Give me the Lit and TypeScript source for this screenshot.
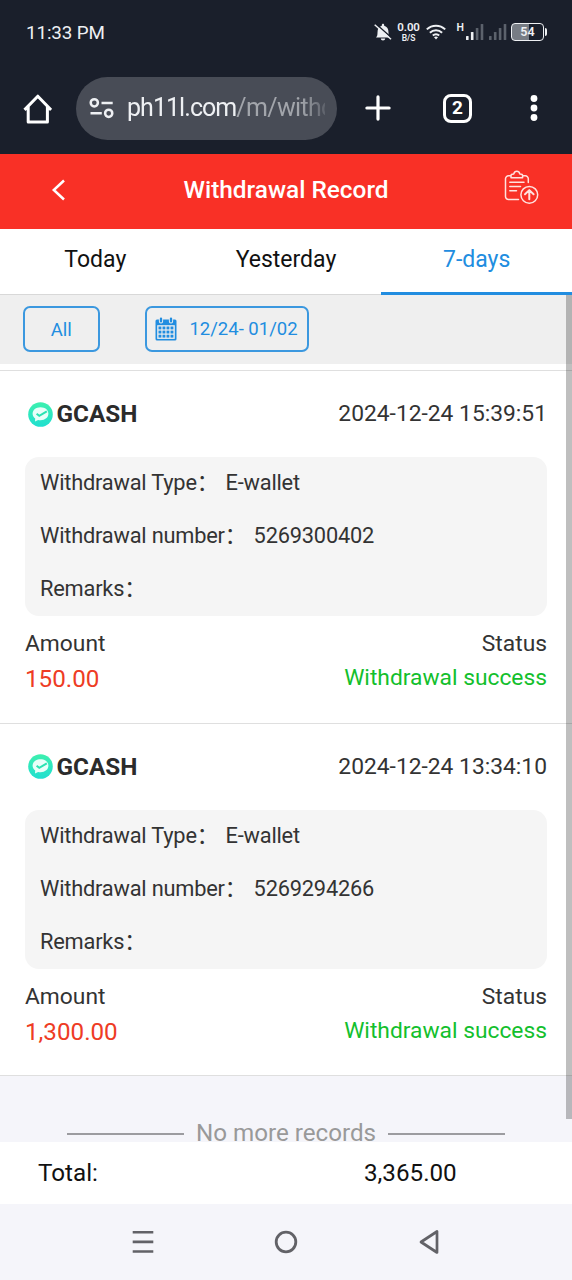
import { LitElement, html, css, svg } from "lit";
import { customElement, property } from "lit/decorators.js";

interface WithdrawalRecord {
  time: string;
  number: string;
  amount: string;
}

const records: WithdrawalRecord[] = [
  { time: "2024-12-24 15:39:51", number: "5269300402", amount: "150.00" },
  { time: "2024-12-24 13:34:10", number: "5269294266", amount: "1,300.00" },
];

@customElement("status-bar")
class StatusBar extends LitElement {
  static styles = css`
    :host { display: flex; height: 63px; align-items: center; justify-content: space-between; box-sizing: border-box; padding: 0 25px 0 26px; color: #eef0f3; }
    .time { font-size: 18.8px; line-height: 24px; letter-spacing: -0.1px; padding-top: 2px; }
    .icons { display: flex; align-items: center; }
    .rate { display: flex; flex-direction: column; align-items: center; width: 24px; margin: 0 5px 0 5px; font-weight: 600; }
    .rate-value { font-size: 11.5px; line-height: 13px; letter-spacing: -0.1px; }
    .rate-unit { font-size: 8.5px; line-height: 10px; margin-top: -1px; }
    .net { font-size: 10.5px; line-height: 10px; font-weight: 600; margin: 0 2px 7px 11px; }
    .battery { display: flex; align-items: center; justify-content: center; box-sizing: border-box; width: 33px; height: 18px; margin-left: 4px; border: 1.7px solid #eef0f3; border-radius: 4px; background: linear-gradient(90deg, #777c84 54%, transparent 54%); font-size: 12.5px; font-weight: 600; }
    .cap { width: 2px; height: 8px; margin-left: 1px; background: #eef0f3; border-radius: 0 2px 2px 0; }
    svg { display: block; }
  `;
  private bars(active: number) {
    return [0, 1, 2, 3].map(
      (i) => svg`<rect x=${i * 4.9} y=${12 - i * 4} width="2.6" height=${4 + i * 4} rx="0.6" fill=${i < active ? "#eef0f3" : "#5c626c"} />`
    );
  }
  render() {
    return html`
      <span class="time">11:33 PM</span>
      <div class="icons">
        <svg width="18" height="18" viewBox="0 0 18 18">
          <path d="M2 14.500c1.300-1.200 1.500-2.600 1.500-5 0-3.600 1.400-6 4.300-6.800C7.800 1.400 8.200.8 9 .8s1.200.6 1.200 1.900c2.900.8 4.300 3.200 4.300 6.800 0 2.400.2 3.800 1.500 5z M6.800 15.500h4.400c0 1.200-1 2-2.200 2s-2.200-.8-2.200-2z" fill="#eef0f3" />
          <path d="M1.800 .8 17.800 15" stroke="#1a1f2b" stroke-width="1.500" />
          <path d="M.7 1.800 17 16.300" stroke="#eef0f3" stroke-width="1.500" />
        </svg>
        <div class="rate"><span class="rate-value">0.00</span><span class="rate-unit">B/S</span></div>
        <svg width="20" height="16" viewBox="0 0 20 16" fill="none" stroke="#eef0f3" stroke-width="2">
          <path d="M.8 5.400a13.300 13.300 0 0 1 18.400 0M3.900 8.700a8.800 8.800 0 0 1 12.200 0M6.800 11.600a4.700 4.700 0 0 1 6.400 0" />
          <path d="M10 15.500l-2-2.200c1.200-1 2.800-1 4 0z" fill="#eef0f3" stroke="none" />
        </svg>
        <span class="net">H</span>
        <svg width="18" height="16" viewBox="0 0 18 16">${this.bars(2)}</svg>
        <svg width="23" height="16" viewBox="-5 0 23 16">${this.bars(0)}</svg>
        <div class="battery">54</div><span class="cap"></span>
      </div>
    `;
  }
}

@customElement("browser-bar")
class BrowserBar extends LitElement {
  static styles = css`
    :host { display: flex; height: 90px; align-items: center; box-sizing: border-box; padding: 0 24px 0 23px; }
    svg { display: block; flex: none; }
    .home { margin-top: 2px; }
    .address { display: flex; align-items: center; box-sizing: border-box; width: 261px; height: 63px; margin-left: 24px; padding: 0 12px; border-radius: 32px; background: #484c56; }
    .url { flex: 1; height: 34px; overflow: hidden; margin-left: 13px; font-size: 25px; line-height: 34px; letter-spacing: -0.95px; white-space: nowrap; color: #eef0f3; mask-image: linear-gradient(90deg, #000 88%, rgba(0, 0, 0, 0.25)); }
    .path { color: #a2a5ab; letter-spacing: -0.65px; }
    .plus { margin-left: 28px; }
    .tabs { display: flex; align-items: center; justify-content: center; box-sizing: border-box; width: 29px; height: 29px; margin-left: 52px; border: 3px solid #fff; border-radius: 8px; color: #fff; font-size: 19px; font-weight: 700; line-height: 20px; }
    .more { margin-left: 57px; }
  `;
  render() {
    return html`
      <svg class="home" width="29" height="31" viewBox="0 0 29 31" fill="none" stroke="#fff" stroke-width="3">
        <path d="M1.500 15.900 14.800 2.200 28.100 15.900M5.200 12.500V27.900h19.200V12.500" stroke-linejoin="round" />
      </svg>
      <div class="address">
        <svg width="26" height="22" viewBox="0 0 26 22" fill="none" stroke="#eef0f3" stroke-width="2.500">
          <circle cx="6.300" cy="5.800" r="3.600" /><circle cx="20.700" cy="16.300" r="3.600" />
          <path d="M13.500 6H24.700M2.500 16.300H13.800" />
        </svg>
        <div class="url">ph11l.com<span class="path">/m/withd</span></div>
      </div>
      <svg class="plus" width="26" height="26" viewBox="0 0 26 26" stroke="#fff" stroke-width="3.200" stroke-linecap="round">
        <path d="M13 1.900V24.100M1.900 13H24.100" />
      </svg>
      <div class="tabs">2</div>
      <svg class="more" width="10" height="28" viewBox="0 0 10 28" fill="#fff">
        <circle cx="5" cy="4.500" r="3.400" /><circle cx="5" cy="14" r="3.400" /><circle cx="5" cy="23.500" r="3.400" />
      </svg>
    `;
  }
}

@customElement("record-item")
class RecordItem extends LitElement {
  @property({ attribute: false }) record!: WithdrawalRecord;
  static styles = css`
    :host { display: block; box-sizing: border-box; height: 352.700px; padding: 27px 25px 0; border-bottom: 1px solid #dfdfdf; background: #fff; color: #333; font-size: 22.800px; line-height: 32px; }
    .head, .foot { display: flex; justify-content: space-between; }
    .head { height: 32px; }
    .wallet { display: flex; align-items: center; gap: 3.500px; padding-left: 3px; font-size: 24.300px; font-weight: 700; color: #2b2b2b; }
    .details { box-sizing: border-box; height: 159px; margin-top: 27px; padding: 10px 15px 0; border-radius: 14px; background: #f5f5f5; font-size: 21.800px; letter-spacing: -0.2px; }
    .row { height: 53px; line-height: 32px; white-space: pre; }
    .value { margin-left: 2px; }
    .foot { margin-top: 12px; }
    .right { text-align: right; }
    .amount, .success { line-height: 36px; }
    .amount { font-size: 24.200px; color: #ee3c24; padding-top: 1px; }
    .success { color: #13bf2d; }
  `;
  render() {
    const r = this.record;
    return html`
      <div class="head">
        <div class="wallet">
          <svg width="25" height="25" viewBox="0 0 25 25">
            <defs><linearGradient id="g" x1="0" y1="0" x2="0" y2="1"><stop offset="0" stop-color="#3df0ae" /><stop offset="1" stop-color="#20dfd0" /></linearGradient></defs>
            <circle cx="12.500" cy="12.500" r="12.300" fill="url(#g)" />
            <path d="M12.500 5.300c4.700 0 7.900 2.800 7.900 6.500s-3.300 6.400-7.900 6.400c-.8 0-1.600-.1-2.400-.3L7 19.500l.2-3.100c-1.700-1.200-2.600-2.800-2.600-4.600 0-3.700 3.300-6.500 7.900-6.500z" fill="#e8fff9" />
            <path d="M8.600 11.700l2.700 2.100 7.500-4.500" fill="none" stroke="#2be3b2" stroke-width="2" />
          </svg>
          <span>GCASH</span>
        </div>
        <span>${r.time}</span>
      </div>
      <div class="details">
        <div class="row">Withdrawal Type： <span class="value">E-wallet</span></div>
        <div class="row">Withdrawal number： <span class="value">${r.number}</span></div>
        <div class="row">Remarks：</div>
      </div>
      <div class="foot">
        <div><div>Amount</div><div class="amount">${r.amount}</div></div>
        <div class="right"><div>Status</div><div class="success">Withdrawal success</div></div>
      </div>
    `;
  }
}

@customElement("app-root")
class AppRoot extends LitElement {
  static styles = css`
    :host { display: flex; flex-direction: column; position: relative; width: 572px; height: 1280px; overflow: hidden; background: #f5f5fa; font-family: Roboto, "Noto Sans CJK SC", sans-serif; }
    svg { display: block; }
    .chrome { flex: none; height: 154px; background: #1a1f2b; }
    .header { flex: none; display: grid; grid-template-columns: 118px 1fr 118px; height: 74.500px; align-items: center; background: #f93026; color: #fff; }
    .title { text-align: center; font-size: 24.400px; font-weight: 500; line-height: 32px; padding-bottom: 3px; }
    .back { margin-left: 51px; margin-bottom: 3px; }
    .clip { margin-left: 50px; margin-bottom: 6px; }
    .tabs { flex: none; display: grid; grid-template-columns: repeat(3, 1fr); height: 66.500px; box-sizing: border-box; background: #fff; }
    .tab { text-align: center; font-size: 23px; line-height: 62px; color: #111; border-bottom: 1px solid #d8d8d8; }
    .active { color: #218de0; border-bottom: 3px solid #218de0; }
    .filters { flex: none; display: flex; height: 69px; align-items: center; box-sizing: border-box; padding: 0 23px 1px; gap: 45px; background: #efefef; }
    .chip { display: flex; align-items: center; justify-content: center; box-sizing: border-box; height: 46px; border: 2px solid #3b98df; border-radius: 7px; color: #218de0; font-size: 18.500px; }
    .all { width: 76.500px; padding-top: 2px; }
    .range { width: 164px; gap: 12px; }
    .gap { flex: none; box-sizing: border-box; height: 7px; border-bottom: 1px solid #dfdfdf; background: #fff; }
    .list { flex: none; }
    .end { display: flex; flex: none; height: 66px; box-sizing: border-box; justify-content: center; gap: 12px; padding-top: 41px; color: #999; font-size: 24.200px; line-height: 25px; }
    .label { padding-top: 4px; }
    .rule { width: 117px; height: 1.500px; margin-top: 16px; background: #9c9ca0; }
    .total { flex: none; display: grid; grid-template-columns: 364px 1fr; height: 62px; line-height: 62px; box-sizing: border-box; background: #fff; color: #111; font-size: 24.200px; }
    .total-label { padding-left: 38px; }
    .nav { flex: none; display: flex; height: 76px; align-items: center; justify-content: center; gap: 118px; box-sizing: border-box; }
    .scroll { position: absolute; z-index: 1; right: 0; top: 295px; width: 6px; height: 824px; background: rgba(0, 0, 0, 0.25); }
  `;
  render() {
    return html`
      <div class="chrome"><status-bar></status-bar><browser-bar></browser-bar></div>
      <div class="header">
        <svg class="back" width="15" height="22" viewBox="0 0 15 22" fill="none" stroke="#fff" stroke-width="2.500"><path d="M13 1.500 2.800 11 13 20.500" /></svg>
        <div class="title">Withdrawal Record</div>
        <svg class="clip" width="36" height="36" viewBox="0 0 36 36" fill="none" stroke="#ffe2df" stroke-width="1.500" stroke-linecap="round" stroke-linejoin="round">
          <path d="M6.500 5.800H4.500A3 3 0 0 0 1.500 8.800V26.500a3 3 0 0 0 3 3H14.500M18.800 5.800h2.500a3 3 0 0 1 3 3V12.500" />
          <path d="M7 7.800V5.500c0-1.100.7-1.600 2.800-1.600C10.200 2.100 11.300 1.200 12.800 1.200s2.600.9 3 2.700c2.100 0 2.800.5 2.800 1.600v2.300z" />
          <path d="M5.800 12.300H20M5.800 16.500H16.500M5.800 20.700H12.500" />
          <circle cx="25.300" cy="24.800" r="8.400" />
          <path d="M25.300 29.300V20.500M21 24.300l4.300-4.200 4.300 4.200" stroke-width="2" />
        </svg>
      </div>
      <div class="tabs">
        <div class="tab">Today</div>
        <div class="tab">Yesterday</div>
        <div class="tab active">7-days</div>
      </div>
      <div class="filters">
        <div class="chip all">All</div>
        <div class="chip range">
          <svg width="22" height="24" viewBox="0 0 22 24">
            <rect x="0.500" y="2.500" width="21" height="21" rx="1.500" fill="#218de0" />
            <rect x="2.200" y="8.200" width="17.600" height="13.700" fill="#efefef" />
            ${[0, 1, 2].flatMap((y) => [0, 1, 2, 3].map((x) => svg`<rect x=${3.5 + x * 4} y=${9.5 + y * 4.1} width="2.900" height="2.900" fill="#218de0" />`))}
            <path d="M6 2V4.500M16 2V4.500" stroke="#efefef" stroke-width="4.200" stroke-linecap="round" />
            <path d="M6 1.800V4.300M16 1.800V4.300" stroke="#218de0" stroke-width="2.400" stroke-linecap="round" />
          </svg>
          <span>12/24- 01/02</span>
        </div>
      </div>
      <div class="gap"></div>
      <div class="list">${records.map((r) => html`<record-item .record=${r}></record-item>`)}</div>
      <div class="end"><span class="rule"></span><span class="label">No more records</span><span class="rule"></span></div>
      <div class="total"><span class="total-label">Total:</span><span>3,365.00</span></div>
      <div class="nav">
        <svg width="24" height="26" viewBox="0 0 24 26" stroke="#626267" stroke-width="2.600"><path d="M1.700 3.300H22.300M1.700 12.900H22.300M1.700 22.500H22.300" /></svg>
        <svg width="26" height="26" viewBox="0 0 26 26" fill="none" stroke="#626267" stroke-width="2.800"><circle cx="13" cy="13" r="9.800" /></svg>
        <svg width="24" height="26" viewBox="0 0 24 26" fill="none" stroke="#626267" stroke-width="2.700" stroke-linejoin="round"><path d="M20 2.500V23.500L4 13z" /></svg>
      </div>
      <div class="scroll"></div>
    `;
  }
}
